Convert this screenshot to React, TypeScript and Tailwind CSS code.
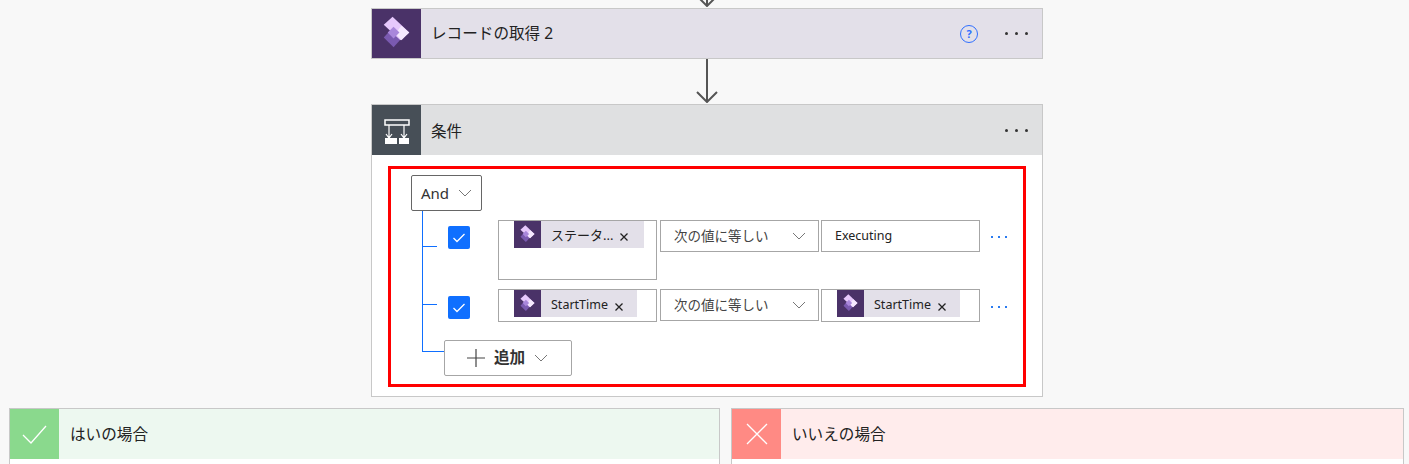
const FONT = "font-['Noto_Sans','Noto_Sans_CJK_JP',sans-serif]";

const AppsIcon = ({ size }: { size: number }) => (
  <svg width={size} height={size} viewBox="0 0 50 50" className="block">
    <polygon points="22,18 31,29 22,39 12,29" fill="#7a5ab0" />
    <polygon points="21,8 38,24 29,32 12,16" fill="#e6c8fc" />
    <polygon points="30,17 38,24 30,32 24,25" fill="#f5e9fe" />
    <polygon points="22,18 28,24 22,30 16,24" fill="#a987db" />
  </svg>
);

const ConditionIcon = () => (
  <svg width="26" height="26" viewBox="0 0 26 26" fill="none" stroke="#fff" strokeWidth="1.2" className="block mt-[3px]">
    <rect x="1" y="1" width="24" height="5" strokeWidth="1.5" />
    <path d="M5 6v13M20 6v13M2 15l3 4 3-4M17 15l3 4 3-4" />
    <rect x="1" y="19" width="12" height="6" fill="#fff" stroke="none" />
    <rect x="15" y="19" width="10" height="6" fill="#fff" stroke="none" />
  </svg>
);

const Chevron = ({ className = "" }: { className?: string }) => (
  <svg width="14" height="8" viewBox="0 0 14 8" fill="none" stroke="#777" strokeWidth="1" className={className}>
    <path d="M1 1l6 6 6-6" />
  </svg>
);

const Dots = ({ color }: { color: string }) => (
  <div className="flex items-center gap-[7px]">
    <span className={`w-[3px] h-[3px] rounded-full ${color}`} />
    <span className={`w-[3px] h-[3px] rounded-full ${color}`} />
    <span className={`w-[3px] h-[3px] rounded-full ${color}`} />
  </div>
);

const BlueDots = () => (
  <div className="flex items-center gap-[5px]">
    <span className="w-[2px] h-[2px] bg-[#2a7bf0]" />
    <span className="w-[2px] h-[2px] bg-[#2a7bf0]" />
    <span className="w-[2px] h-[2px] bg-[#2a7bf0]" />
  </div>
);

const Chip = ({ label, width, text, close }: { label: string; width: string; text: string; close: string }) => (
  <div className={`flex items-center h-[27px] bg-[#e3e0e9] ${width}`}>
    <div className="flex items-center justify-center w-[27px] h-[27px] bg-[#4a3268] shrink-0">
      <AppsIcon size={27} />
    </div>
    <span className={`ml-[10px] text-[#222] leading-none whitespace-nowrap ${text}`}>{label}</span>
    <svg width="8" height="8" viewBox="0 0 8 8" fill="none" stroke="#222" strokeWidth="1.3" className={`ml-[7px] shrink-0 ${close}`}>
      <path d="M0.5 0.5l7 7M7.5 0.5l-7 7" />
    </svg>
  </div>
);

const Checkbox = ({ mt }: { mt: string }) => (
  <div className={`flex items-center justify-center w-[22px] h-[23px] ml-[11px] rounded-[2px] bg-[#0f6fff] shrink-0 ${mt}`}>
    <svg width="14" height="10" viewBox="0 0 14 10" fill="none" stroke="#fff" strokeWidth="1.3">
      <path d="M1.5 5l3.5 3.5 7.5-7.5" />
    </svg>
  </div>
);

const Operator = () => (
  <div className="flex items-center justify-between w-[159px] h-[32px] ml-[3px] pl-[13px] pr-[12px] border border-[#a6a6a6] bg-white shrink-0">
    <span className="text-[13.5px] text-[#444] whitespace-nowrap">次の値に等しい</span>
    <Chevron />
  </div>
);

const ArrowDown = ({ height }: { height: number }) => (
  <svg width="24" height={height} viewBox={`0 0 24 ${height}`} fill="none" stroke="#555" strokeWidth="2" className="block">
    <path d={`M12 0v${height - 1}M2 ${height - 11}l10 10 10-10`} />
  </svg>
);

const Branch = ({ title, head, tile, icon, className }: { title: string; head: string; tile: string; icon: React.ReactNode; className: string }) => (
  <div className={`h-[56px] border border-b-0 border-[#c8c8c8] bg-white ${className}`}>
    <div className={`flex items-center h-[50px] ${head}`}>
      <div className={`flex items-center justify-center w-[49px] h-[50px] ${tile}`}>{icon}</div>
      <span className="ml-[11px] mt-[1px] text-[15.6px] text-[#222]">{title}</span>
    </div>
  </div>
);

export default function App() {
  return (
    <div className={`w-[1409px] h-[464px] overflow-hidden bg-[#f8f8f8] ${FONT}`}>
      <div className="flex justify-center w-[671px] ml-[371px] h-[8px] overflow-hidden">
        <ArrowDown height={7} />
      </div>

      <div className="flex items-center w-[672px] h-[51px] ml-[371px] border border-[#c8c8c8] bg-[#e3e0e9]">
        <div className="w-[49px] h-[49px] bg-[#4a3268] shrink-0">
          <AppsIcon size={49} />
        </div>
        <span className="ml-[10px] text-[15.6px] text-[#222]">レコードの取得 2</span>
        <div className="ml-auto flex items-center justify-center w-[18px] h-[18px] rounded-full border-[1.5px] border-[#2f6fff] text-[11px] font-bold text-[#2f6fff] leading-none mr-[27px]">?</div>
        <div className="mr-[14px]">
          <Dots color="bg-[#333]" />
        </div>
      </div>

      <div className="flex justify-center w-[671px] ml-[371px] h-[45px]">
        <ArrowDown height={44} />
      </div>

      <div className="w-[672px] h-[293px] ml-[371px] border border-[#c8c8c8] bg-white">
        <div className="flex items-center h-[50px] bg-[#dfe0e1]">
          <div className="flex items-center justify-center w-[49px] h-[50px] bg-[#474f57] shrink-0">
            <ConditionIcon />
          </div>
          <span className="ml-[10px] mt-[3px] text-[15.6px] text-[#222]">条件</span>
          <div className="ml-auto mr-[14px] mt-[1px]">
            <Dots color="bg-[#333]" />
          </div>
        </div>

        <div className="w-[638px] h-[221px] mt-[11px] ml-[16px] border-[3px] border-[#ff0000] pt-[6px]">
          <div className="flex items-center justify-between w-[71px] h-[36px] ml-[20px] pl-[9px] pr-[9px] border border-[#666] rounded-[2px] bg-white">
            <span className="text-[15px] text-[#333]">And</span>
            <Chevron />
          </div>

          <div className="ml-[31px] border-l border-[#0f6fff] pt-[9px] pb-[18px]">
            <div className="flex items-start">
              <span className="w-[14px] h-px mt-[26px] bg-[#0f6fff] shrink-0" />
              <Checkbox mt="mt-[6px]" />
              <div className="w-[159px] h-[60px] ml-[28px] pl-[15px] border border-[#a6a6a6] shrink-0">
                <Chip label="ステータ..." width="w-[130px]" text="text-[13px] mt-[2px]" close="mt-[5px]" />
              </div>
              <Operator />
              <div className="flex items-center w-[159px] h-[32px] ml-[2px] pl-[13px] border border-[#a6a6a6] shrink-0">
                <span className="text-[12.5px] text-[#222]">Executing</span>
              </div>
              <div className="ml-[11px] mt-[16px]">
                <BlueDots />
              </div>
            </div>

            <div className="flex items-start mt-[9px]">
              <span className="w-[14px] h-px mt-[15px] bg-[#0f6fff] shrink-0" />
              <Checkbox mt="mt-[7px]" />
              <div className="w-[159px] h-[33px] ml-[28px] pl-[15px] border border-[#a6a6a6] shrink-0">
                <Chip label="StartTime" width="w-[123px]" text="text-[12.5px] mt-[4px]" close="mt-[7px]" />
              </div>
              <Operator />
              <div className="w-[159px] h-[33px] ml-[2px] pl-[15px] border border-[#a6a6a6] shrink-0">
                <Chip label="StartTime" width="w-[123px]" text="text-[12.5px] mt-[4px]" close="mt-[7px]" />
              </div>
              <div className="ml-[11px] mt-[17px]">
                <BlueDots />
              </div>
            </div>
          </div>

          <div className="flex items-start ml-[31px]">
            <span className="w-[22px] h-[12px] border-l border-b border-[#0f6fff] shrink-0" />
            <div className="flex items-center w-[128px] h-[36px] pl-[21px] border border-[#a6a6a6] rounded-[2px] bg-white">
              <svg width="20" height="20" viewBox="0 0 20 20" fill="none" stroke="#444" strokeWidth="1.2">
                <path d="M10 1v18M1 10h18" />
              </svg>
              <span className="ml-[8px] text-[15.6px] font-bold text-[#333]">追加</span>
              <Chevron className="ml-[9px]" />
            </div>
          </div>
        </div>
      </div>

      <div className="flex gap-[11px] mt-[11px] ml-[9px]">
        <Branch
          title="はいの場合"
          head="bg-[#edf8f0]"
          tile="bg-[#8ad98d]"
          className="w-[711px]"
          icon={
            <svg width="25" height="19" viewBox="0 0 25 19" fill="none" stroke="#fff" strokeWidth="1.3" className="mt-[1px]">
              <path d="M1 10l8 8L24 1" />
            </svg>
          }
        />
        <Branch
          title="いいえの場合"
          head="bg-[#ffecec]"
          tile="bg-[#ff8a84]"
          className="w-[673px]"
          icon={
            <svg width="22" height="22" viewBox="0 0 22 22" fill="none" stroke="#fff" strokeWidth="1.3">
              <path d="M1 1l20 20M21 1L1 21" />
            </svg>
          }
        />
      </div>
    </div>
  );
}
